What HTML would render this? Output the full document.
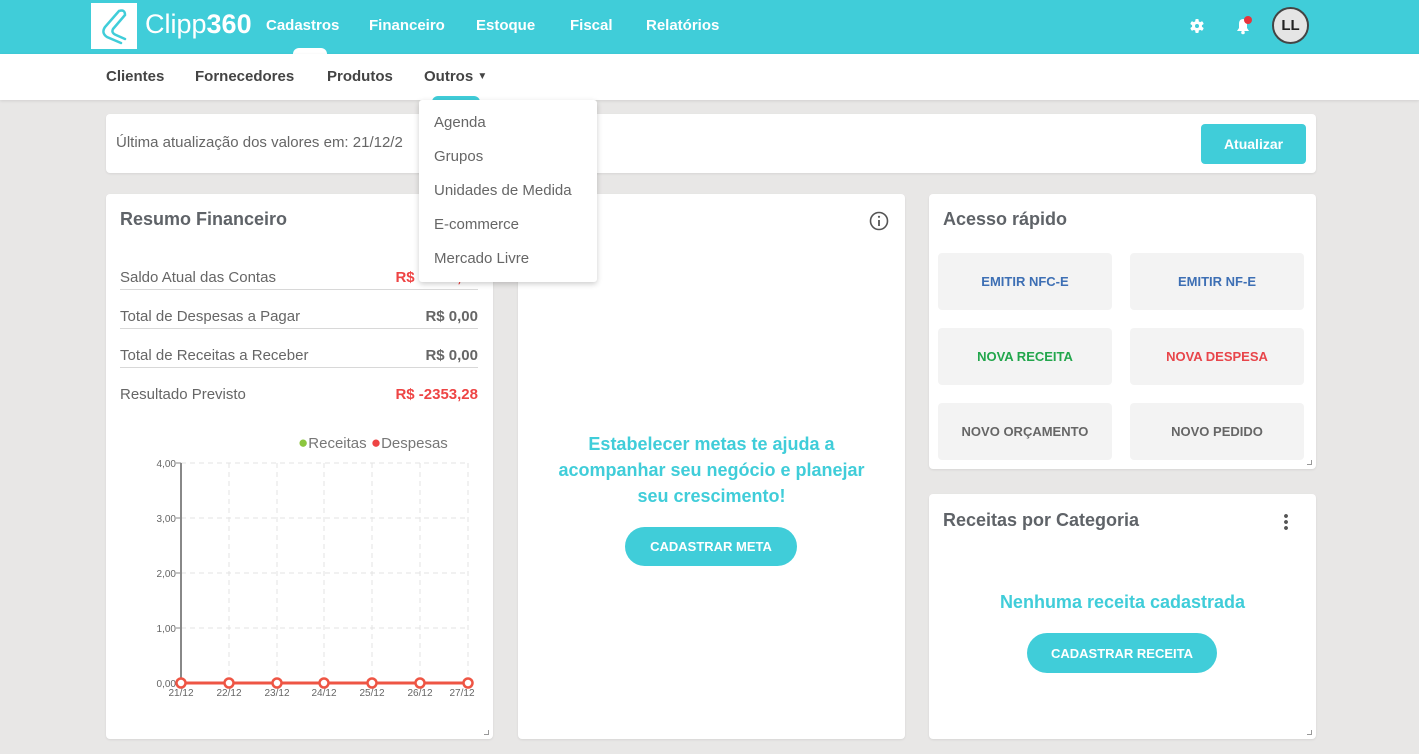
<!DOCTYPE html>
<html><head><meta charset="utf-8">
<style>
*{box-sizing:border-box;margin:0;padding:0}
body{width:1419px;height:754px;overflow:hidden;background:#e8e7e6;font-family:"Liberation Sans",sans-serif;position:relative;color:#666}
.a{position:absolute}
.top{left:0;top:0;width:1419px;height:54px;background:#40cdd9}
.nav{font-weight:bold;color:#fff;font-size:15px;top:17px}
.sub{left:0;top:54px;width:1419px;height:46px;background:#fff;box-shadow:0 1px 3px rgba(0,0,0,.1)}
.sn{font-weight:bold;color:#444;font-size:15px;top:68px}
.card{background:#fff;border-radius:4px;box-shadow:0 1px 2px rgba(0,0,0,.08)}
.h{font-weight:bold;color:#5f6368;font-size:18px}
.row{left:120px;width:358px;height:39px;border-bottom:1px solid #d8d8d8;font-size:15px;color:#666}
.row span{position:absolute;left:0;top:18px}
.row b{position:absolute;right:0;top:18px;font-size:15px}
.btn{background:#f3f3f3;border-radius:4px;width:174px;height:57px;font-weight:bold;font-size:13px;display:flex;align-items:center;justify-content:center}
.pill{background:#40cdd9;color:#fff;font-weight:bold;font-size:13px;border-radius:20px;display:flex;align-items:center;justify-content:center}
.dd{left:419px;top:100px;width:178px;height:182px;background:#fff;border-radius:3px;box-shadow:0 2px 6px rgba(0,0,0,.2)}
.dd div{position:absolute;left:15px;font-size:15px;color:#666}
.rs{width:5px;height:5px;border-right:1px solid #999;border-bottom:1px solid #999}
</style></head><body>
<div class="a top"></div>
<div class="a" style="left:91px;top:3px;width:46px;height:46px;background:#fff"></div>
<svg class="a" style="left:91px;top:3px" width="46" height="46" viewBox="0 0 46 46"><path d="M28 8 L14 24 Q10 30 16 34 L30 40 M28 8 Q34 6 34 12 L22 26 Q20 30 25 32 L34 36" fill="none" stroke="#40cdd9" stroke-width="2.5" stroke-linecap="round"/></svg>
<div class="a" style="left:145px;top:9px;font-size:27px;color:#fff">Clipp<b>360</b></div>
<div class="a nav" style="left:266px">Cadastros</div>
<div class="a nav" style="left:369px">Financeiro</div>
<div class="a nav" style="left:476px">Estoque</div>
<div class="a nav" style="left:570px">Fiscal</div>
<div class="a nav" style="left:646px">Relatórios</div>
<svg class="a" style="left:1188px;top:17px" width="18" height="18" viewBox="0 0 18 18"><g fill="#fff"><rect x="7.3" y="2" width="3.4" height="14" rx="1"/><rect x="7.3" y="2" width="3.4" height="14" rx="1" transform="rotate(60 9 9)"/><rect x="7.3" y="2" width="3.4" height="14" rx="1" transform="rotate(120 9 9)"/><circle cx="9" cy="9" r="5"/></g><circle cx="9" cy="9" r="2" fill="#40cdd9"/></svg>
<svg class="a" style="left:1233px;top:14px" width="22" height="22" viewBox="0 0 22 22"><path d="M4 17 L6 14 V10 Q6 5 10 5 Q14 5 14 10 V14 L16 17 Z" fill="#fff"/><circle cx="10" cy="18.5" r="1.8" fill="#fff"/><circle cx="15" cy="6" r="4" fill="#e8343c"/></svg>
<div class="a" style="left:1272px;top:7px;width:37px;height:37px;border-radius:50%;background:#e5e5e5;border:2px solid #444;font-weight:bold;font-size:15px;color:#222;display:flex;align-items:center;justify-content:center">LL</div>
<div class="a" style="left:293px;top:48px;width:34px;height:8px;border-radius:6px 6px 0 0;background:#fff"></div>

<div class="a sub"></div>
<div class="a sn" style="left:106px">Clientes</div>
<div class="a sn" style="left:195px">Fornecedores</div>
<div class="a sn" style="left:327px">Produtos</div>
<div class="a sn" style="left:424px">Outros <span style="font-size:10px;position:relative;top:-2px">▼</span></div>
<div class="a" style="left:432px;top:96px;width:48px;height:6px;border-radius:6px 6px 0 0;background:#40cdd9"></div>

<div class="a card" style="left:106px;top:114px;width:1210px;height:59px"></div>
<div class="a" style="left:116px;top:134px;font-size:15px;color:#666">Última atualização dos valores em: 21/12/2</div>
<div class="a" style="left:1201px;top:124px;width:105px;height:40px;background:#40cdd9;border-radius:4px;color:#fff;font-weight:bold;font-size:14px;display:flex;align-items:center;justify-content:center">Atualizar</div>

<div class="a card" style="left:106px;top:194px;width:387px;height:545px"></div>
<div class="a rs" style="left:484px;top:730px"></div>
<div class="a h" style="left:120px;top:209px">Resumo Financeiro</div>
<div class="a row" style="top:251px"><span>Saldo Atual das Contas</span><b style="color:#ee4444">R$ -2353,28</b></div>
<div class="a row" style="top:290px"><span>Total de Despesas a Pagar</span><b style="color:#666">R$ 0,00</b></div>
<div class="a row" style="top:329px"><span>Total de Receitas a Receber</span><b style="color:#666">R$ 0,00</b></div>
<div class="a row" style="top:368px;border:none"><span>Resultado Previsto</span><b style="color:#ee4444">R$ -2353,28</b></div>
<div class="a" style="left:298px;top:433px;font-size:15px;color:#777"><span style="color:#8cc63f;font-size:17px">●</span>Receitas <span style="color:#ee4444;font-size:17px">●</span>Despesas</div>
<svg class="a" style="left:106px;top:450px" width="387" height="260" viewBox="106 450 387 260">
<g stroke="#e3e3e3" stroke-dasharray="5 4" fill="none">
<path d="M181 463H468M181 518H468M181 573H468M181 628H468"/>
<path d="M229 463V683M277 463V683M324 463V683M372 463V683M420 463V683M468 463V683"/>
</g>
<path d="M181 463V683" stroke="#888" stroke-width="2"/>
<path d="M176 463H181M176 518H181M176 573H181M176 628H181" stroke="#888"/>
<g font-size="10" fill="#666" font-family="Liberation Sans" text-anchor="end">
<text x="176" y="467">4,00</text><text x="176" y="522">3,00</text><text x="176" y="577">2,00</text><text x="176" y="632">1,00</text><text x="176" y="687">0,00</text></g>
<path d="M181 683H468" stroke="#ee5544" stroke-width="3"/>
<g fill="#fff" stroke="#ee5544" stroke-width="2.5">
<circle cx="181" cy="683" r="4.5"/><circle cx="229" cy="683" r="4.5"/><circle cx="277" cy="683" r="4.5"/><circle cx="324" cy="683" r="4.5"/><circle cx="372" cy="683" r="4.5"/><circle cx="420" cy="683" r="4.5"/><circle cx="468" cy="683" r="4.5"/></g>
<g font-size="10" fill="#666" font-family="Liberation Sans" text-anchor="middle">
<text x="181" y="696">21/12</text><text x="229" y="696">22/12</text><text x="277" y="696">23/12</text><text x="324" y="696">24/12</text><text x="372" y="696">25/12</text><text x="420" y="696">26/12</text><text x="462" y="696">27/12</text></g>
</svg>

<div class="a card" style="left:518px;top:194px;width:387px;height:545px"></div>
<svg class="a" style="left:868px;top:210px" width="22" height="22" viewBox="0 0 22 22"><circle cx="11" cy="11" r="8.5" fill="none" stroke="#555" stroke-width="1.6"/><path d="M11 10V16" stroke="#555" stroke-width="1.8"/><circle cx="11" cy="6.8" r="1.1" fill="#555"/></svg>
<div class="a" style="left:518px;top:431px;width:387px;text-align:center;font-weight:bold;font-size:18px;line-height:26px;color:#40cdd9">Estabelecer metas te ajuda a<br>acompanhar seu negócio e planejar<br>seu crescimento!</div>
<div class="a pill" style="left:625px;top:527px;width:172px;height:39px">CADASTRAR META</div>

<div class="a card" style="left:929px;top:194px;width:387px;height:275px"></div>
<div class="a rs" style="left:1307px;top:460px"></div>
<div class="a h" style="left:943px;top:209px">Acesso rápido</div>
<div class="a btn" style="left:938px;top:253px;color:#3d6fb4">EMITIR NFC-E</div>
<div class="a btn" style="left:1130px;top:253px;color:#3d6fb4">EMITIR NF-E</div>
<div class="a btn" style="left:938px;top:328px;color:#22a64c">NOVA RECEITA</div>
<div class="a btn" style="left:1130px;top:328px;color:#e8454a">NOVA DESPESA</div>
<div class="a btn" style="left:938px;top:403px;color:#666">NOVO ORÇAMENTO</div>
<div class="a btn" style="left:1130px;top:403px;color:#666">NOVO PEDIDO</div>

<div class="a card" style="left:929px;top:494px;width:387px;height:245px"></div>
<div class="a rs" style="left:1307px;top:730px"></div>
<div class="a h" style="left:943px;top:510px">Receitas por Categoria</div>
<div class="a" style="left:1284px;top:513px;width:4px;height:18px;background:radial-gradient(circle,#555 1.8px,transparent 2px) 0 0/4px 6px"></div>
<div class="a" style="left:929px;top:592px;width:387px;text-align:center;font-weight:bold;font-size:18px;color:#40cdd9">Nenhuma receita cadastrada</div>
<div class="a pill" style="left:1027px;top:633px;width:190px;height:40px">CADASTRAR RECEITA</div>

<div class="a dd">
<div style="top:14px">Agenda</div>
<div style="top:48px">Grupos</div>
<div style="top:82px">Unidades de Medida</div>
<div style="top:116px">E-commerce</div>
<div style="top:150px">Mercado Livre</div>
</div>
</body></html>
